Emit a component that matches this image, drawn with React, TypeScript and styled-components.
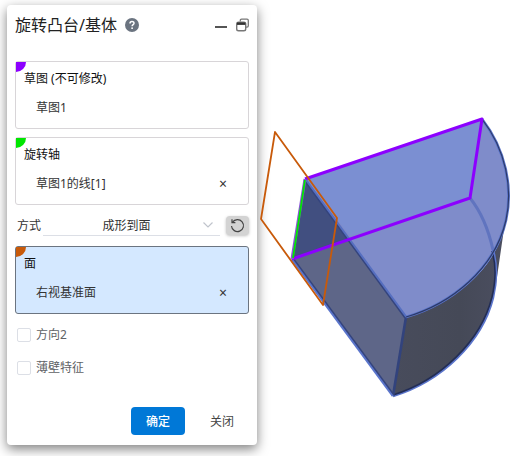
import React from "react";
import styled, { createGlobalStyle } from "styled-components";

const GlobalStyle = createGlobalStyle`
  *, *::before, *::after { box-sizing: border-box; }
  body {
    margin: 0;
    background: #fff;
    color: #333;
    font: 12px/18px "Noto Sans", "Noto Sans CJK SC", sans-serif;
  }
  button, select, input { font: inherit; color: inherit; margin: 0; }
`;

const Workspace = styled.main`
  display: flex;
  align-items: flex-start;
  padding-left: 7px;
`;

const Panel = styled.form`
  flex: 0 0 250px;
  display: flex;
  flex-direction: column;
  margin-top: 5px;
  padding: 8px 8px 10px;
  border-radius: 4px;
  background: #fff;
  box-shadow: 0 4px 12px rgba(0, 0, 0, 0.5);
`;

const Header = styled.header`
  display: flex;
  align-items: center;
  height: 24px;
  margin-bottom: 24px;
`;

const Title = styled.h1`
  margin: 0;
  font-size: 16px;
  line-height: 24px;
  font-weight: 400;
  color: #222;
`;

const IconButton = styled.button<{ $push?: boolean }>`
  display: flex;
  padding: 0;
  border: 0;
  background: none;
  cursor: pointer;
  margin-left: ${(p) => (p.$push ? "auto" : "8px")};
`;

const Card = styled.section<{ $active?: boolean }>`
  position: relative;
  height: 68px;
  padding: 8px 18px 0 8px;
  border: 1px solid ${(p) => (p.$active ? "#6b7480" : "#d8d5d8")};
  border-radius: 3px;
  background: ${(p) => (p.$active ? "#d4e8ff" : "#fff")};
  & + & { margin-top: 8px; }
`;

const Swatch = styled.span<{ $color: string }>`
  position: absolute;
  top: 0;
  left: 0;
  width: 10px;
  height: 10px;
  border-bottom-right-radius: 10px;
  background: ${(p) => p.$color};
`;

const CardTitle = styled.h2`
  position: relative;
  margin: 0;
  font: inherit;
  color: #111;
`;

const Item = styled.div`
  display: flex;
  justify-content: space-between;
  margin-top: 11px;
  padding-left: 12px;
`;

const Remove = styled.button`
  width: 14px;
  padding: 0;
  border: 0;
  background: none;
  font-size: 14px;
  line-height: 18px;
  cursor: pointer;
`;

const ModeRow = styled.div`
  display: flex;
  align-items: center;
  height: 21px;
  margin: 10px 0;
  padding-left: 2px;
`;

const SelectWrap = styled.div`
  flex: 1;
  display: grid;
  align-items: center;
  margin: 0 6px 0 2px;
  border-bottom: 1px solid #dcdfe6;
  > * { grid-area: 1 / 1; }
  > svg { justify-self: end; margin-right: 6px; pointer-events: none; }
`;

const Select = styled.select`
  appearance: none;
  width: 100%;
  height: 20px;
  padding: 1px 10px 0 0;
  border: 0;
  background: none;
  text-align-last: center;
`;

const ResetButton = styled.button`
  display: grid;
  place-items: center;
  width: 23px;
  height: 19px;
  padding: 0;
  border: 0;
  border-radius: 4px;
  background: #d3d3d3;
  box-shadow: 0 1px 3px rgba(0, 0, 0, 0.25);
`;

const Option = styled.label`
  display: flex;
  align-items: center;
  gap: 5px;
  height: 18px;
  margin-top: 15px;
  padding-left: 2px;
  color: #606266;
`;

const Options = styled.div`
  margin-top: -3px;
`;

const Checkbox = styled.input`
  appearance: none;
  width: 14px;
  height: 14px;
  border: 1px solid #dcdfe6;
  border-radius: 2px;
  background: #fff;
  &:checked { background: #0078d7; }
`;

const Footer = styled.footer`
  display: flex;
  justify-content: flex-end;
  gap: 10px;
  margin-top: 30px;
`;

const Action = styled.button<{ $primary?: boolean }>`
  width: 54px;
  height: 28px;
  padding: 1px 0 0;
  border: 0;
  border-radius: 4px;
  background: ${(p) => (p.$primary ? "#0078d7" : "transparent")};
  && { color: ${(p) => (p.$primary ? "#fff" : "#444")}; }
  font-weight: ${(p) => (p.$primary ? 500 : 400)};
`;

const Viewport = styled.svg`
  flex: 1;
  min-width: 0;
  display: block;
`;

type SelectionProps = {
  title: string;
  item: string;
  color: string;
  active?: boolean;
  removable?: boolean;
};

function Selection({ title, item, color, active, removable }: SelectionProps) {
  return (
    <Card $active={active}>
      <Swatch $color={color} />
      <CardTitle>{title}</CardTitle>
      <Item>
        <span>{item}</span>
        {removable && <Remove type="button">×</Remove>}
      </Item>
    </Card>
  );
}

function HelpIcon() {
  return (
    <svg width="14" height="14" viewBox="0 0 14 14" aria-hidden="true">
      <circle cx="7" cy="7" r="7" fill="#6b7480" />
      <path d="M5 5.4C5 2.9 9 2.9 9 5.2C9 6.7 7.1 6.6 7.1 8.3" fill="none" stroke="#fff" strokeWidth="1.5" />
      <rect x="6.3" y="9.4" width="1.6" height="1.6" fill="#fff" />
    </svg>
  );
}

const rim = "M482 119C506 150 513 188 506 220C495 269 451 304 406 317";
const lowerRim = "M493 250C497 264 497 281 493 298C482 342 442 381 393 396";

function Model() {
  return (
    <Viewport viewBox="257 0 259 456" preserveAspectRatio="xMinYMin meet" role="img" aria-label="3D">
      <defs>
        <linearGradient id="wall" x1="0" x2="1">
          <stop offset="0" stopColor="#484c5c" />
          <stop offset="0.6" stopColor="#454957" />
          <stop offset="1" stopColor="#4b4e60" />
        </linearGradient>
        <clipPath id="front">
          <path d="M305 179L406 317L393 396L292 259Z" />
        </clipPath>
      </defs>
      <path d="M406 317C458 301 498 266 505 222L496 284L493 298C482 342 442 381 393 396Z" fill="url(#wall)" />
      <path d={`M305 179L${rim.slice(1)}Z`} fill="#7f8cca" />
      <path d="M305 179L482 119L470 198L350 236Z" fill="#7b8fd2" />
      <path d="M305 179L406 317L393 396L292 259Z" fill="#5e6688" />
      <path d="M305 179L482 119L470 198L292 259Z" fill="#414f80" clipPath="url(#front)" />
      <g fill="none" strokeLinejoin="round">
        <path d="M470 198Q486 218 493 250" stroke="#6074bf" strokeWidth="3" />
        <path d={lowerRim} stroke="#5b75cb" strokeWidth="2.4" />
        <path d="M492 251C496 264 496 280 492 297C481 341 441 380 393 395" stroke="#222d55" strokeWidth="1.6" />
        <path d="M406 317L393 396" stroke="#32437d" strokeWidth="2.6" />
        <path d="M292 259L393 396" stroke="#5b75cb" strokeWidth="2.6" />
        <path d="M293 258L394 395" stroke="#34447e" strokeWidth="1.4" />
        <path d="M305 179L406 317" stroke="#566fc0" strokeWidth="2.6" />
        <path d="M304 180L405 318" stroke="#34447e" strokeWidth="1.4" />
        <path d={rim} stroke="#5b75cb" strokeWidth="2.8" />
        <path d={rim} stroke="#2c3a68" strokeWidth="1.2" />
        <path d="M305 179L482 119L470 198L292 259" stroke="#8c00ff" strokeWidth="3" />
        <path d="M305 179L292 259" stroke="#8b51d9" strokeWidth="3" />
        <path d="M305 180L293 258" stroke="#00e600" strokeWidth="1.8" />
        <path d="M275 132L337 218L323 305L261 219Z" stroke="#c85a0a" strokeWidth="1.8" />
      </g>
    </Viewport>
  );
}

export default function App() {
  return (
    <>
      <GlobalStyle />
      <Workspace>
        <Panel onSubmit={(e: React.FormEvent) => e.preventDefault()}>
          <Header>
            <Title>旋转凸台/基体</Title>
            <IconButton type="button" aria-label="帮助">
              <HelpIcon />
            </IconButton>
            <IconButton type="button" aria-label="最小化" $push>
              <svg width="12" height="12" viewBox="0 0 12 12">
                <path d="M0 8H12" stroke="#555" strokeWidth="2" />
              </svg>
            </IconButton>
            <IconButton type="button" aria-label="还原">
              <svg width="14" height="14" viewBox="0 0 14 14" fill="none" stroke="#777">
                <path d="M5.3 3.5V2.4Q5.3 1.1 6.6 1.1H12Q13.3 1.1 13.3 2.4V7.8Q13.3 9.1 12 9.1H11" strokeWidth="1.3" />
                <rect x="1.7" y="4.2" width="9" height="8.6" rx="1.8" strokeWidth="1.4" />
                <path d="M2 5.7H10.4" stroke="#333" strokeWidth="2.4" />
              </svg>
            </IconButton>
          </Header>

          <Selection title="草图 (不可修改)" item="草图1" color="#8c00ff" />
          <Selection title="旋转轴" item="草图1的线[1]" color="#00e600" removable />

          <ModeRow>
            <label htmlFor="mode">方式</label>
            <SelectWrap>
              <Select id="mode" defaultValue="face">
                <option value="face">成形到面</option>
              </Select>
              <svg width="12" height="8" viewBox="0 0 12 8" fill="none" stroke="#c0c4cc" strokeWidth="1.2">
                <path d="M1.5 1.5L6 6L10.5 1.5" />
              </svg>
            </SelectWrap>
            <ResetButton type="button" aria-label="反向">
              <svg width="15" height="15" viewBox="0 0 15 15" fill="none" stroke="#444" strokeWidth="1.2">
                <path d="M2.5 4.2A6 6 0 1 1 1.5 8" />
                <path d="M2 1.3V4.7H5.4" />
              </svg>
            </ResetButton>
          </ModeRow>

          <Selection title="面" item="右视基准面" color="#c85a0a" active removable />

          <Options>
            <Option>
              <Checkbox type="checkbox" />
              方向2
            </Option>
            <Option>
              <Checkbox type="checkbox" />
              薄壁特征
            </Option>
          </Options>

          <Footer>
            <Action type="submit" $primary>确定</Action>
            <Action type="button">关闭</Action>
          </Footer>
        </Panel>
        <Model />
      </Workspace>
    </>
  );
}
